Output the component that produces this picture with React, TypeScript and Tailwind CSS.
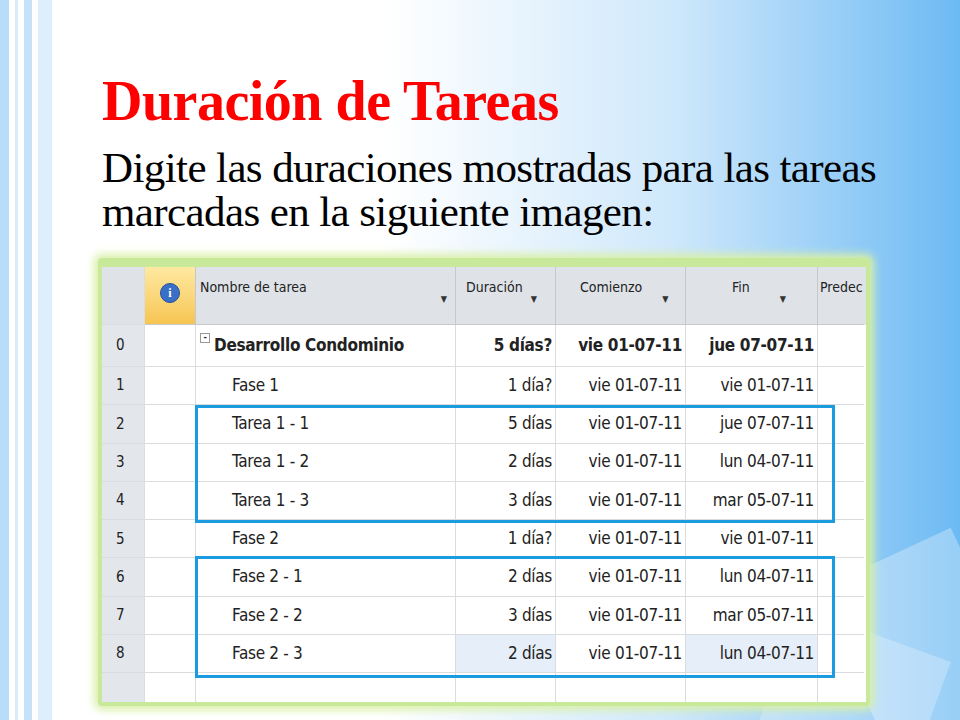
import React from 'react';

const rows = [
  { n: '0', name: 'Desarrollo Condominio', dur: '5 días?', start: 'vie 01-07-11', end: 'jue 07-07-11', bold: true },
  { n: '1', name: 'Fase 1', dur: '1 día?', start: 'vie 01-07-11', end: 'vie 01-07-11' },
  { n: '2', name: 'Tarea 1 - 1', dur: '5 días', start: 'vie 01-07-11', end: 'jue 07-07-11' },
  { n: '3', name: 'Tarea 1 - 2', dur: '2 días', start: 'vie 01-07-11', end: 'lun 04-07-11' },
  { n: '4', name: 'Tarea 1 - 3', dur: '3 días', start: 'vie 01-07-11', end: 'mar 05-07-11' },
  { n: '5', name: 'Fase 2', dur: '1 día?', start: 'vie 01-07-11', end: 'vie 01-07-11' },
  { n: '6', name: 'Fase 2 - 1', dur: '2 días', start: 'vie 01-07-11', end: 'lun 04-07-11' },
  { n: '7', name: 'Fase 2 - 2', dur: '3 días', start: 'vie 01-07-11', end: 'mar 05-07-11' },
  { n: '8', name: 'Fase 2 - 3', dur: '2 días', start: 'vie 01-07-11', end: 'lun 04-07-11', sel: true },
];

const cols = 'grid grid-cols-[43px_51px_260px_100px_130px_132px_46px]';
const cell = 'border-r border-b border-[#dadcdd]';

function Arrow() {
  return <span className="text-[9px] text-[#333] mt-[14px]">▼</span>;
}

export default function App() {
  return (
    <div className="relative w-[960px] h-[720px] overflow-hidden bg-gradient-to-r from-white from-40% via-[#cfe8fb] via-70% to-[#6cbaf3]" style={{ fontFamily: '"Liberation Serif", serif' }}>
      <div className="absolute left-0 top-0 h-full flex gap-[6px]">
        <div className="w-[9px] h-full bg-[#b9dcf8]" />
        <div className="w-[3px] h-full bg-[#d8ecfb]" />
        <div className="w-[8px] h-full bg-[#c5e2f9]" />
        <div className="w-[14px] h-full bg-[#ddeffc]" />
      </div>
      <div className="absolute right-[-40px] bottom-[-30px] w-[150px] h-[200px] bg-white/30 rotate-[-25deg]" />
      <div className="absolute right-[30px] bottom-[-60px] w-[160px] h-[150px] bg-white/25 rotate-[20deg]" />

      <div className="pl-[102px] pt-[70px]">
        <h1 className="text-[56px] leading-[62px] font-bold text-[#ff0000] tracking-[-0.5px]">Duración de Tareas</h1>
        <p className="mt-[14px] text-[43px] leading-[44px] text-black tracking-[-0.6px]">
          Digite las duraciones mostradas para las tareas<br />marcadas en la siguiente imagen:
        </p>
      </div>

      <div className="absolute left-[98px] top-[258px] w-[772px] h-[448px] rounded-[4px] bg-[#c8e99a] px-[4px] pt-[9px] pb-[4px] shadow-[0_0_8px_4px_#d9f0a8]">
        <div className="relative w-full h-full bg-white overflow-hidden text-[#222]" style={{ fontFamily: '"DejaVu Sans Condensed", "Liberation Sans", sans-serif' }}>
          <div className={`${cols} h-[58px] bg-[#dfe3e8] text-[14px]`}>
            <div className={`${cell} border-[#c5c9ce]`} />
            <div className="border-r border-b border-[#c5c9ce] bg-gradient-to-b from-[#ffe9a0] to-[#f6c550] flex justify-center pt-[16px]">
              <div className="w-[20px] h-[20px] rounded-full bg-[#3a6fc8] border border-[#24509e] text-white text-[12px] font-bold flex items-center justify-center" style={{ fontFamily: '"Liberation Serif", serif' }}>i</div>
            </div>
            <div className="border-r border-b border-[#c5c9ce] flex justify-between px-[4px] pt-[10px]"><span>Nombre de tarea</span><span className="mr-[4px] mt-[10px]"><Arrow /></span></div>
            <div className="border-r border-b border-[#c5c9ce] flex gap-[8px] pl-[10px] pt-[10px]"><span>Duración</span><span className="mt-[10px]"><Arrow /></span></div>
            <div className="border-r border-b border-[#c5c9ce] flex gap-[20px] pl-[24px] pt-[10px]"><span>Comienzo</span><span className="mt-[10px]"><Arrow /></span></div>
            <div className="border-r border-b border-[#c5c9ce] flex gap-[30px] pl-[46px] pt-[10px]"><span>Fin</span><span className="mt-[10px]"><Arrow /></span></div>
            <div className="border-b border-[#c5c9ce] pl-[2px] pt-[10px] overflow-hidden whitespace-nowrap">Predec</div>
          </div>
          {rows.map((r, i) => (
            <div key={r.n} className={`${cols} ${i === 0 ? 'h-[42px]' : 'h-[38.3px]'} text-[17px] tracking-[-0.3px]`}>
              <div className={`${cell} bg-[#e3e6ea] pl-[14px] flex items-center text-[15px]`}>{r.n}</div>
              <div className={cell} />
              <div className={`${cell} flex items-center ${r.bold ? 'font-bold pl-[4px]' : 'pl-[36px]'}`}>
                {r.bold && <span className="w-[10px] h-[10px] border border-[#999] text-[9px] leading-[6px] mr-[4px] self-start mt-[8px] text-center">-</span>}
                {r.name}
              </div>
              <div className={`${cell} flex items-center justify-end pr-[3px] ${r.bold ? 'font-bold' : ''} ${r.sel ? 'bg-[#e6eef9]' : ''}`}>{r.dur}</div>
              <div className={`${cell} flex items-center justify-end pr-[3px] ${r.bold ? 'font-bold' : ''}`}>{r.start}</div>
              <div className={`${cell} flex items-center justify-end pr-[3px] ${r.bold ? 'font-bold' : ''} ${r.sel ? 'bg-[#e6eef9]' : ''}`}>{r.end}</div>
              <div className="border-b border-[#dadcdd]" />
            </div>
          ))}
          <div className={`${cols} h-[30px]`}>
            <div className="border-r border-[#dadcdd] bg-[#e3e6ea]" />
            <div className="border-r border-[#dadcdd]" />
            <div className="border-r border-[#dadcdd]" />
            <div className="border-r border-[#dadcdd]" />
            <div className="border-r border-[#dadcdd]" />
            <div className="border-r border-[#dadcdd]" />
          </div>
          <div className="absolute left-[93px] top-[138px] w-[640px] h-[118px] border-[3px] border-[#1b9be0]" />
          <div className="absolute left-[93px] top-[289px] w-[640px] h-[122px] border-[3px] border-[#1b9be0]" />
        </div>
      </div>
    </div>
  );
}
